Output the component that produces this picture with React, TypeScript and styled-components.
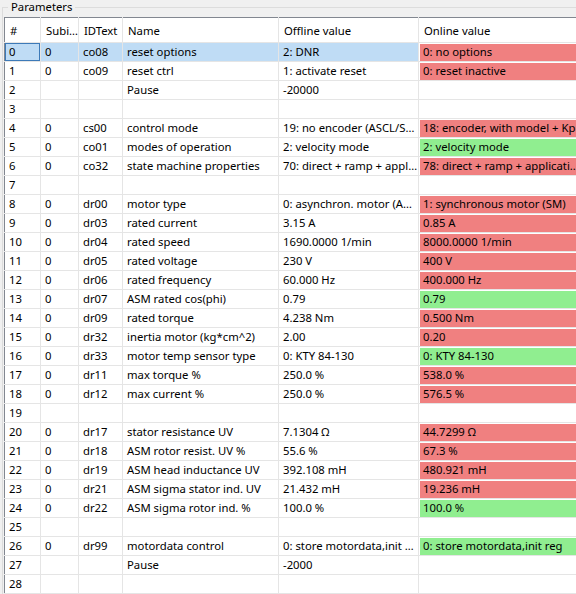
import styled, { createGlobalStyle } from "styled-components";

const GlobalStyle = createGlobalStyle`
  body { margin: 0; background: #f0f0f0; font-family: "Noto Sans", "DejaVu Sans", sans-serif; font-size: 11.3px; color: #000; }
`;

type Mark = "red" | "green" | undefined;
type Row = [string, string, string, string, string, Mark];

const rows: Row[] = [
  ["0", "co08", "reset options", "2: DNR", "0: no options", "red"],
  ["0", "co09", "reset ctrl", "1: activate reset", "0: reset inactive", "red"],
  ["", "", "Pause", "-20000", "", undefined],
  ["", "", "", "", "", undefined],
  ["0", "cs00", "control mode", "19: no encoder (ASCL/SSC)", "18: encoder, with model + Kp", "red"],
  ["0", "co01", "modes of operation", "2: velocity mode", "2: velocity mode", "green"],
  ["0", "co32", "state machine properties", "70: direct + ramp + application", "78: direct + ramp + application", "red"],
  ["", "", "", "", "", undefined],
  ["0", "dr00", "motor type", "0: asynchron. motor (ASM)", "1: synchronous motor (SM)", "red"],
  ["0", "dr03", "rated current", "3.15 A", "0.85 A", "red"],
  ["0", "dr04", "rated speed", "1690.0000 1/min", "8000.0000 1/min", "red"],
  ["0", "dr05", "rated voltage", "230 V", "400 V", "red"],
  ["0", "dr06", "rated frequency", "60.000 Hz", "400.000 Hz", "red"],
  ["0", "dr07", "ASM rated cos(phi)", "0.79", "0.79", "green"],
  ["0", "dr09", "rated torque", "4.238 Nm", "0.500 Nm", "red"],
  ["0", "dr32", "inertia motor (kg*cm^2)", "2.00", "0.20", "red"],
  ["0", "dr33", "motor temp sensor type", "0: KTY 84-130", "0: KTY 84-130", "green"],
  ["0", "dr11", "max torque %", "250.0 %", "538.0 %", "red"],
  ["0", "dr12", "max current %", "250.0 %", "576.5 %", "red"],
  ["", "", "", "", "", undefined],
  ["0", "dr17", "stator resistance UV", "7.1304 Ω", "44.7299 Ω", "red"],
  ["0", "dr18", "ASM rotor resist. UV %", "55.6 %", "67.3 %", "red"],
  ["0", "dr19", "ASM head inductance UV", "392.108 mH", "480.921 mH", "red"],
  ["0", "dr21", "ASM sigma stator ind. UV", "21.432 mH", "19.236 mH", "red"],
  ["0", "dr22", "ASM sigma rotor ind. %", "100.0 %", "100.0 %", "green"],
  ["", "", "", "", "", undefined],
  ["0", "dr99", "motordata control", "0: store motordata,init reg", "0: store motordata,init reg", "green"],
  ["", "", "Pause", "-2000", "", undefined],
  ["", "", "", "", "", undefined],
];

const widths = [36, 38, 44, 156, 140, 162];

const GroupBox = styled.div`
  position: relative;
  margin: 7px 0 0 2px;
  border: 1px solid #dcdcdc;
  border-right: none;
  border-bottom: none;
  padding: 9px 0 0 1px;
`;

const Legend = styled.span`
  position: absolute;
  top: -8px;
  left: 5px;
  padding: 0 3px;
  background: #f0f0f0;
  line-height: 14px;
`;

const Grid = styled.table`
  table-layout: fixed;
  border-collapse: collapse;
  background: #fff;
  border-left: 1px solid #828790;
  border-top: 1px solid #828790;
  width: 574px;
`;

const Head = styled.th`
  height: 24px;
  padding: 0 0 0 5px;
  font-weight: normal;
  text-align: left;
  border-right: 1px solid #e5e5e5;
  border-bottom: 1px solid #e5e5e5;
  white-space: nowrap;
  overflow: hidden;
  text-overflow: ellipsis;
`;

const Cell = styled.td<{ $mark?: Mark; $sel?: boolean; $focus?: boolean }>`
  height: 18px;
  padding: 0 0 0 4px;
  border-right: 1px solid #e5e5e5;
  border-bottom: 1px solid #e5e5e5;
  white-space: nowrap;
  overflow: hidden;
  text-overflow: ellipsis;
  background: ${(p) => (p.$mark === "red" ? "#f08080" : p.$mark === "green" ? "#90ee90" : p.$sel ? "#bfdcf5" : "#fff")};
  box-shadow: ${(p) => (p.$mark ? "inset 1px 1px 0 #fff" : p.$focus ? "inset 0 0 0 1px #3d7ab8" : "none")};
  line-height: 18px;
`;

export default function App() {
  return (
    <>
      <GlobalStyle />
      <GroupBox>
        <Legend>Parameters</Legend>
        <Grid>
          <colgroup>
            {widths.map((w, i) => (
              <col key={i} style={{ width: w }} />
            ))}
          </colgroup>
          <thead>
            <tr>
              {["#", "Subindex", "IDText", "Name", "Offline value", "Online value"].map((h) => (
                <Head key={h}>{h}</Head>
              ))}
            </tr>
          </thead>
          <tbody>
            {rows.map((r, i) => (
              <tr key={i}>
                <Cell $sel={i === 0} $focus={i === 0}>{i}</Cell>
                <Cell $sel={i === 0}>{r[0]}</Cell>
                <Cell $sel={i === 0}>{r[1]}</Cell>
                <Cell $sel={i === 0}>{r[2]}</Cell>
                <Cell $sel={i === 0}>{r[3]}</Cell>
                <Cell $mark={r[5]}>{r[4]}</Cell>
              </tr>
            ))}
          </tbody>
        </Grid>
      </GroupBox>
    </>
  );
}
